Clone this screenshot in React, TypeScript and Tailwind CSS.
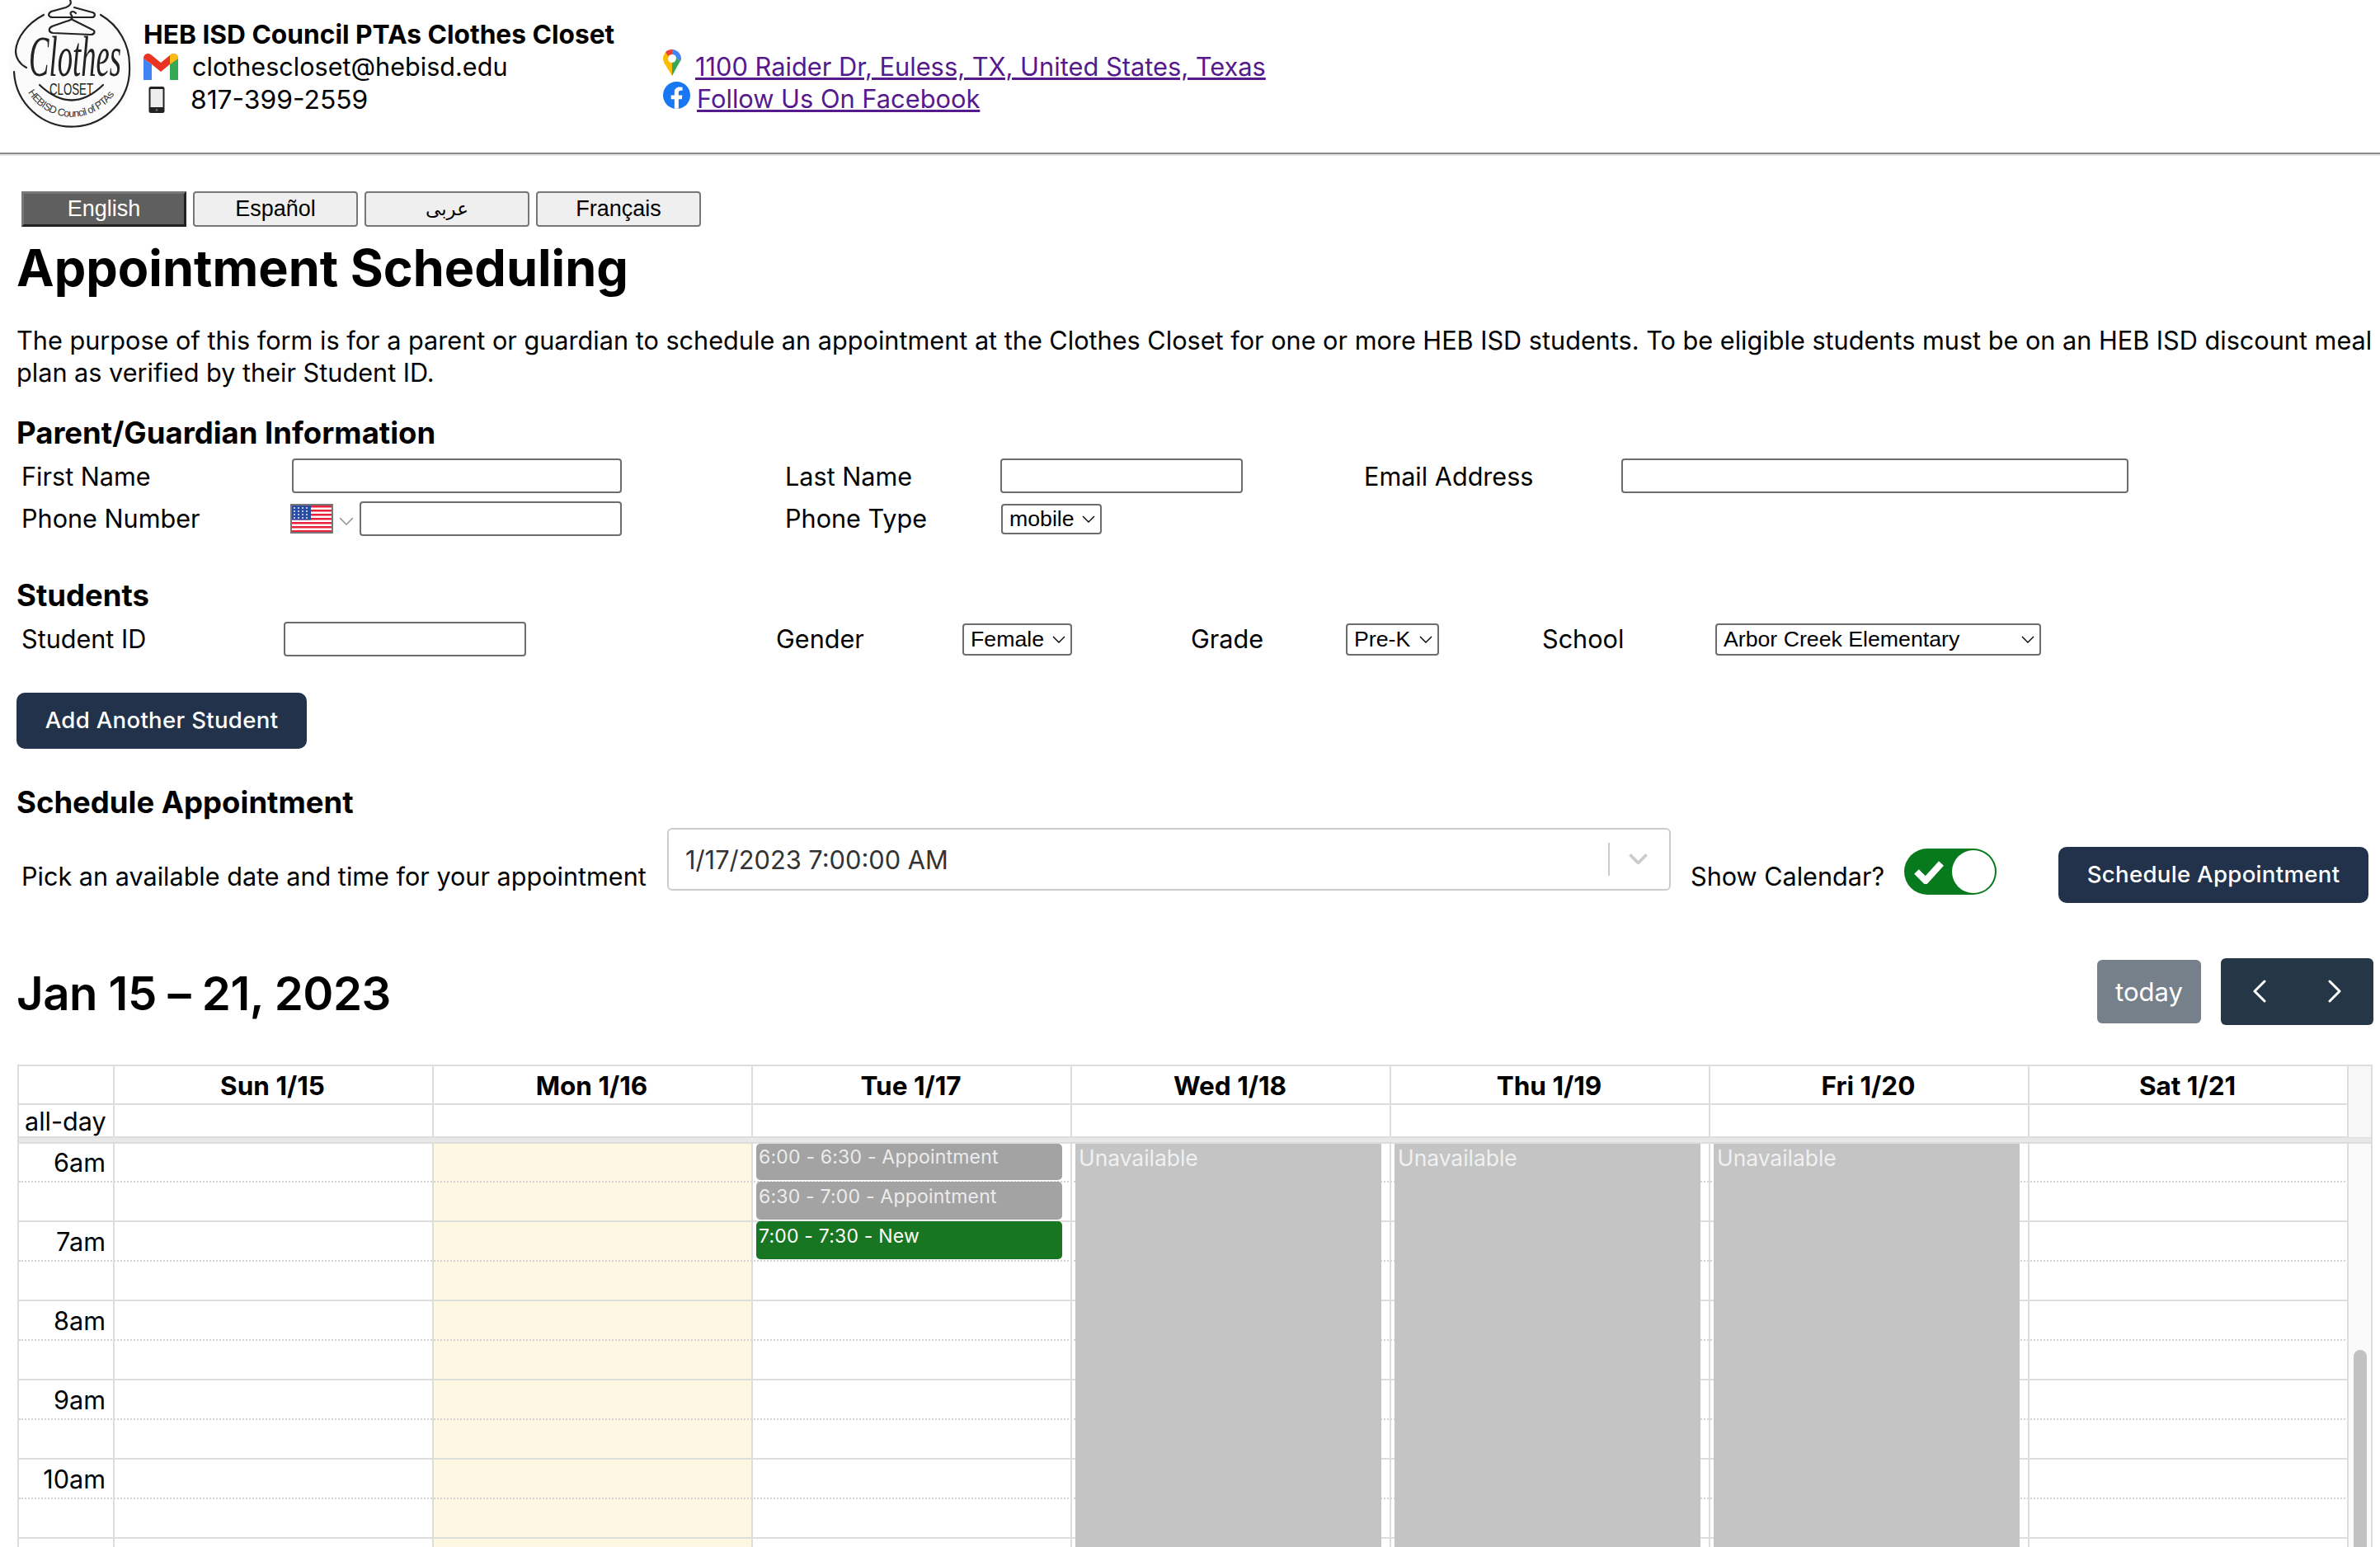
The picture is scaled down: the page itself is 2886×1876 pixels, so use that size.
import type { ReactNode } from "react";

const font = "font-['Inter','DejaVu_Sans',sans-serif]";

const labelCls = "text-[30.6px] leading-[38px] text-black";
const h2Cls = "pl-[20px] text-[36.5px] font-bold leading-[46px] text-black";
const inputCls = "h-[42px] rounded-[4px] border-2 border-[#6d6d6d] bg-white";
const selectCls =
  "flex items-center justify-between rounded-[4px] border-2 border-[#6d6d6d] bg-white pl-[8px] pr-[6px] font-['Liberation_Sans',sans-serif] text-[26.7px] leading-none text-black";
const darkBtn = "flex items-center justify-center rounded-[10px] bg-[#22324a] text-[27.6px] font-medium tracking-[0.3px] text-white";

const days = ["Sun 1/15", "Mon 1/16", "Tue 1/17", "Wed 1/18", "Thu 1/19", "Fri 1/20", "Sat 1/21"];
const hours = ["6am", "7am", "8am", "9am", "10am", ""];

function Chevron({ className, width = 1.4 }: { className?: string; width?: number }) {
  return (
    <svg viewBox="0 0 16 9" className={className} fill="none" stroke="currentColor" strokeWidth={width}>
      <path d="M1 1l7 7 7-7" />
    </svg>
  );
}

function Logo() {
  return (
    <svg viewBox="0 0 168 156" className="h-[156px] w-[168px]">
      <circle cx="87" cy="80" r="77" fill="#fbfbfb" />
      <g fill="none" stroke="#222" strokeWidth="2.2" strokeLinecap="round">
        <path d="M53 18C34 28 20 45 19 62c0 8 5 16 13 20" />
        <path d="M17 87A70 70 0 0 0 157 80A70 70 0 0 0 122 18" />
        <path d="M48 103Q87 140 125 103" />
        <path d="M85 0c2 4 0 7-5 9L62 14c-5 3-3 7 2 7h47c5 0 5-5 1-6L90 9" />
        <path d="M92 16c-4-4-9-1-5 3 2 4-2 6-7 7L63 32c-5 3-4 7 1 8l46 2c5 0 6-5 2-6L88 24" />
      </g>
      <text x="35" y="92" fontFamily="'Liberation Serif', serif" fontStyle="italic" fontSize="70" fill="#222" textLength="112" lengthAdjust="spacingAndGlyphs">Clothes</text>
      <text x="60" y="115" fontFamily="'Liberation Sans', sans-serif" fontSize="20" fill="#222" textLength="53" lengthAdjust="spacingAndGlyphs">CLOSET</text>
      <path id="logo-arc" d="M34 112A62 62 0 0 0 140 112" fill="none" />
      <text fontFamily="'Liberation Sans', sans-serif" fontSize="12.5" fill="#333">
        <textPath href="#logo-arc" textLength="124">HEBISD Council of PTAs</textPath>
      </text>
    </svg>
  );
}

function GmailIcon() {
  return (
    <svg viewBox="0 0 42 32" className="h-[32px] w-[42px]">
      <path d="M0 6v26h10V13z" fill="#3f82f1" />
      <path d="M32 13v19h10V6z" fill="#34a853" />
      <path d="M0 6c0-6 6-8 10-4l11 9 11-9c4-4 10-2 10 4l-10 7-11 9-11-9z" fill="#ea3323" />
      <path d="M32 2c4-4 10-2 10 4l-10 7z" fill="#f8bc15" />
    </svg>
  );
}

function PhoneIcon() {
  return (
    <svg viewBox="0 0 20 32" className="h-[32px] w-[20px]">
      <rect x="0.5" y="0" width="19" height="32" rx="2.500" fill="#222" />
      <rect x="2.500" y="3" width="15" height="22" fill="#eee" />
      <circle cx="10" cy="28.500" r="1.400" fill="#666" />
    </svg>
  );
}

function MapPin() {
  return (
    <svg viewBox="0 0 22 32" className="h-[32px] w-[22px] shrink-0">
      <path d="M11 0C5 0 0 5 0 11c0 3 1 5 3 8l8 13V16c-3 0-5-2-5-5z" fill="#fbbc04" />
      <path d="M3 3C5 1 8 0 11 0v6C9 6 7 7 6 8z" fill="#ea4335" />
      <path d="M11 0c6 0 11 5 11 11 0 1 0 2-1 3l-5-4c0-2-2-4-5-4z" fill="#4285f4" />
      <path d="M21 14c-1 2-2 3-3 5l-7 13V16c3 0 5-3 5-6z" fill="#34a853" />
      <circle cx="11" cy="11" r="4" fill="#fff" />
    </svg>
  );
}

function FacebookIcon() {
  return (
    <svg viewBox="0 0 32 32" className="h-[33px] w-[33px] shrink-0">
      <circle cx="16" cy="16" r="16" fill="#1877f2" />
      <path d="M22 20.600l.7-4.600h-4.400v-3c0-1.300.6-2.500 2.600-2.500h2V6.600s-1.800-.3-3.500-.3c-3.600 0-6 2.200-6 6.100V16H9.400v4.600h4v11.200h4.900V20.600z" fill="#fff" />
    </svg>
  );
}

function UsFlag() {
  return (
    <svg viewBox="0 0 48 32" preserveAspectRatio="none" className="h-[36px] w-[52px] border-2 border-[#777]">
      <rect width="48" height="32" fill="#fff" />
      {[0, 1, 2, 3, 4, 5, 6].map((i) => (
        <rect key={i} y={i * 5} width="48" height="2.500" fill="#e8203a" />
      ))}
      <rect width="23" height="17.500" fill="#2a4d9f" />
      {[3, 8, 13, 18].flatMap((x) =>
        [3, 7, 11, 15].map((y) => <circle key={`${x}-${y}`} cx={x} cy={y} r="0.9" fill="#fff" />)
      )}
    </svg>
  );
}

function LangButton({ children, active }: { children: ReactNode; active?: boolean }) {
  return (
    <div
      className={
        active
          ? "flex h-[43px] w-[200px] items-center justify-center border-[3px] border-t-[#777] border-l-[#777] border-r-[#222] border-b-[#222] bg-[#5f5f5f] font-['Liberation_Sans','DejaVu_Sans',sans-serif] text-[27px] text-white"
          : "flex h-[43px] w-[200px] items-center justify-center rounded-[4px] border-2 border-[#777] bg-[#efefef] font-['Liberation_Sans','DejaVu_Sans',sans-serif] text-[27px] text-black"
      }
    >
      {children}
    </div>
  );
}

function Header() {
  return (
    <header className="flex h-[187px] border-b-2 border-[#8a8a8a] shadow-[0_2px_0_#e4e4e4]">
      <div className="w-[174px]">
        <Logo />
      </div>
      <div className="mt-[23px] w-[630px]">
        <div className="text-[31.7px] font-bold leading-[38px] text-black">HEB ISD Council PTAs Clothes Closet</div>
        <div className="flex h-[40px] items-center">
          <GmailIcon />
          <span className="ml-[17px] text-[30.6px] text-black">clothescloset@hebisd.edu</span>
        </div>
        <div className="flex h-[40px] items-center pl-[6px]">
          <PhoneIcon />
          <span className="ml-[31px] text-[31.8px] text-black">817-399-2559</span>
        </div>
      </div>
      <div className="mt-[60px] text-[30.8px] leading-[42px] text-[#551a8b]">
        <div className="flex h-[39px] items-start">
          <MapPin />
          <span className="ml-[17px] underline">1100 Raider Dr, Euless, TX, United States, Texas</span>
        </div>
        <div className="flex h-[40px] items-start">
          <FacebookIcon />
          <span className="ml-[8px] underline">Follow Us On Facebook</span>
        </div>
      </div>
    </header>
  );
}

function ParentInfo() {
  return (
    <section className="mt-[31px]">
      <h2 className={h2Cls}>Parent/Guardian Information</h2>
      <div className="mt-[8px] flex h-[42px] items-center">
        <span className={`ml-[26px] w-[328px] pt-[2px] ${labelCls}`}>First Name</span>
        <div className={`w-[400px] ${inputCls}`} />
        <span className={`ml-[198px] w-[261px] pt-[2px] ${labelCls}`}>Last Name</span>
        <div className={`w-[294px] ${inputCls}`} />
        <span className={`ml-[147px] w-[312px] pt-[2px] ${labelCls}`}>Email Address</span>
        <div className={`w-[615px] ${inputCls}`} />
      </div>
      <div className="mt-[10px] flex h-[42px] items-center">
        <span className={`ml-[26px] w-[326px] ${labelCls}`}>Phone Number</span>
        <UsFlag />
        <Chevron className="ml-[7px] mt-[6px] w-[18px] text-[#999]" />
        <div className={`ml-[7px] w-[318px] ${inputCls}`} />
        <span className={`ml-[198px] w-[262px] ${labelCls}`}>Phone Type</span>
        <div className={`h-[37px] w-[122px] ${selectCls}`}>
          mobile
          <Chevron className="w-[16px]" />
        </div>
      </div>
    </section>
  );
}

function Students() {
  return (
    <section className="mt-[49px]">
      <h2 className={h2Cls}>Students</h2>
      <div className="mt-[9px] flex h-[42px] items-center">
        <span className={`ml-[26px] w-[318px] ${labelCls}`}>Student ID</span>
        <div className={`w-[294px] ${inputCls}`} />
        <span className={`ml-[303px] w-[226px] ${labelCls}`}>Gender</span>
        <div className={`h-[39px] w-[133px] ${selectCls}`}>
          Female
          <Chevron className="w-[16px]" />
        </div>
        <span className={`ml-[144px] w-[188px] ${labelCls}`}>Grade</span>
        <div className={`h-[39px] w-[113px] ${selectCls}`}>
          Pre-K
          <Chevron className="w-[16px]" />
        </div>
        <span className={`ml-[125px] w-[210px] ${labelCls}`}>School</span>
        <div className={`h-[39px] w-[395px] ${selectCls}`}>
          Arbor Creek Elementary
          <Chevron className="w-[16px]" />
        </div>
      </div>
      <div className={`ml-[20px] mt-[44px] h-[68px] w-[352px] ${darkBtn}`}>Add Another Student</div>
    </section>
  );
}

function ScheduleRow() {
  return (
    <section className="mt-[42px]">
      <h2 className={h2Cls}>Schedule Appointment</h2>
      <div className="mt-[21px] flex h-[91px] items-center">
        <span className={`ml-[26px] w-[783px] ${labelCls}`}>Pick an available date and time for your appointment</span>
        <div className="flex h-[76px] w-[1217px] -translate-y-[21px] items-center rounded-[6px] border-2 border-[#ccc] bg-white pl-[20px]">
          <span className="flex-1 pt-[3px] text-[30.8px] text-[#333]">1/17/2023 7:00:00 AM</span>
          <div className="h-[40px] w-[2px] bg-[#ccc]" />
          <Chevron width={2.6} className="ml-[23px] mr-[26px] w-[23px] text-[#ccc]" />
        </div>
        <span className={`ml-[24px] w-[259px] ${labelCls}`}>Show Calendar?</span>
        <div className="relative flex h-[56px] w-[112px] -translate-y-[6px] items-center rounded-full bg-[#087a1e] pl-[12px]">
          <svg viewBox="0 0 36 30" className="w-[36px]">
            <path d="M3 15l11 11L33 5" fill="none" stroke="#fff" strokeWidth="8" />
          </svg>
          <div className="absolute right-[2px] top-[2px] h-[52px] w-[52px] rounded-full bg-white" />
        </div>
        <div className={`ml-[75px] h-[68px] w-[376px] -translate-y-[2px] ${darkBtn}`}>Schedule Appointment</div>
      </div>
    </section>
  );
}

function Toolbar() {
  return (
    <div className="mt-[53px] flex h-[82px] items-center pl-[20px] pr-[8px]">
      <h2 className="flex-1 pt-[6px] text-[56.300px] font-semibold tracking-[-0.5px] text-black">Jan 15 – 21, 2023</h2>
      <div className="flex h-[77px] w-[126px] items-center justify-center rounded-[6px] bg-[#75808a] pt-[2px] text-[31px] text-white">today</div>
      <div className="ml-[24px] flex h-[81px] w-[185px] items-center justify-between rounded-[6px] bg-[#253746] px-[38px] text-white">
        <svg viewBox="0 0 17 28" className="h-[28px] w-[17px]" fill="none" stroke="currentColor" strokeWidth="3" strokeLinecap="round" strokeLinejoin="round">
          <path d="M15 2L3 14l12 12" />
        </svg>
        <svg viewBox="0 0 17 28" className="h-[28px] w-[17px]" fill="none" stroke="currentColor" strokeWidth="3" strokeLinecap="round" strokeLinejoin="round">
          <path d="M2 2l12 12L2 26" />
        </svg>
      </div>
    </div>
  );
}

function Calendar() {
  return (
    <div className="ml-[21px] mr-[9px] mt-[48px] border-2 border-b-0 border-[#ddd]">
      <div className="grid h-[47px] grid-cols-[116px_repeat(7,387px)_27px] border-b-2 border-[#ddd]">
        <div className="border-r-2 border-[#ddd]" />
        {days.map((d) => (
          <div key={d} className="flex items-center justify-center border-r-2 border-[#ddd] pr-[2px] text-[31.5px] font-bold text-black">
            {d}
          </div>
        ))}
        <div className="bg-[#f8f8f8]" />
      </div>
      <div className="grid h-[40px] grid-cols-[116px_repeat(7,387px)_27px] border-b-2 border-[#ddd]">
        <div className="border-r-2 border-[#ddd] pl-[7px] text-[30.6px] leading-[39px] text-black">all-day</div>
        {days.map((d) => (
          <div key={d} className="border-r-2 border-[#ddd]" />
        ))}
        <div className="bg-[#f8f8f8]" />
      </div>
      <div className="h-[5px] bg-[#e8e8e8]" />
      <div className="relative h-[491px] overflow-hidden border-t-2 border-[#ddd]">
        <div className="absolute inset-y-0 left-[114px] grid w-[2709px] grid-cols-7">
          {days.map((d, i) => (
            <div key={d} className={i === 1 ? "bg-[#fef7e1]" : ""} />
          ))}
        </div>
        <div className="relative">
          {hours.map((h, i) => (
            <div key={i}>
              <div className={i === 0 ? "h-[47px] border-b-2 border-dotted border-[#d4d4d4]" : "h-[48px] border-b-2 border-dotted border-[#d4d4d4]"}>
                <div className={i === 0 ? "w-[105px] pt-[5px] text-right text-[30.6px] leading-[36px] text-black" : "w-[105px] pt-[6px] text-right text-[30.6px] leading-[36px] text-black"}>{h}</div>
              </div>
              <div className="h-[48px] border-b-2 border-[#ddd]" />
            </div>
          ))}
        </div>
        <div className="absolute inset-y-0 left-[114px] grid w-[2709px] grid-cols-7">
          {days.map((d, i) => (
            <div key={d} className="relative border-l-2 border-[#ddd]">
              {i === 2 && (
                <div className="absolute left-[4px] right-[10px] top-0 flex flex-col gap-[2px] text-[23px] leading-[30px] tracking-[0.2px]">
                  <div className="h-[44px] rounded-[5px] bg-[#a3a3a3] pl-[3px] pt-[1px] text-[#ececec]">6:00 - 6:30 - Appointment</div>
                  <div className="h-[46px] rounded-[5px] bg-[#a3a3a3] pl-[3px] pt-[3px] text-[#ececec]">6:30 - 7:00 - Appointment</div>
                  <div className="h-[46px] rounded-[5px] bg-[#187521] pl-[3px] pt-[3px] text-white">7:00 - 7:30 - New</div>
                </div>
              )}
              {i >= 3 && i <= 5 && (
                <div className="absolute inset-y-0 left-[4px] right-[10px] bg-[#c4c4c4] pl-[4px] text-[26.4px] leading-[34px] text-[#f0f0f0]">
                  Unavailable
                </div>
              )}
            </div>
          ))}
        </div>
        <div className="absolute inset-y-0 right-0 w-[29px] border-l-2 border-[#ddd] bg-[#fafafa]">
          <div className="absolute left-[6px] top-[250px] h-[400px] w-[16px] rounded-full bg-[#c1c1c1]" />
        </div>
      </div>
    </div>
  );
}

export default function App() {
  return (
    <div className={`h-[1876px] w-[2886px] overflow-hidden bg-white ${font}`}>
      <Header />
      <div className="mt-[45px] flex gap-[8px] pl-[26px]">
        <LangButton active>English</LangButton>
        <LangButton>Español</LangButton>
        <LangButton>
          <span className="text-[23px]">عربى</span>
        </LangButton>
        <LangButton>Français</LangButton>
      </div>
      <h1 className="mt-[12px] pl-[20px] text-[61.2px] font-bold leading-[76px] text-black">Appointment Scheduling</h1>
      <p className="mt-[30px] pl-[20px] pr-[6px] text-[30.65px] leading-[39px] text-black">
        The purpose of this form is for a parent or guardian to schedule an appointment at the Clothes Closet for one or more HEB ISD students. To be eligible students must be on an HEB ISD discount meal plan as verified by their Student ID.
      </p>
      <ParentInfo />
      <Students />
      <ScheduleRow />
      <Toolbar />
      <Calendar />
    </div>
  );
}
